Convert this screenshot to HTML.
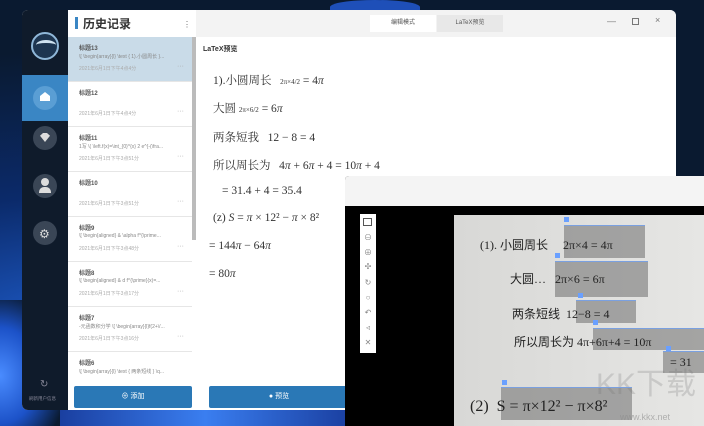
<!DOCTYPE html>
<html style="width:704px;height:426px;overflow:hidden"><head><meta charset="utf-8"><style>
*{margin:0;padding:0;box-sizing:border-box}
body{width:704px;height:426px;overflow:hidden;position:relative;background:#0a1a30;font-family:"Liberation Sans","Noto Sans CJK SC",sans-serif}
.abs{position:absolute}
.serif{font-family:"Liberation Serif","Noto Serif CJK SC",serif;color:#333;font-size:11.5px;white-space:nowrap}
.item{position:absolute;left:68px;width:124px;height:45px;border-bottom:1px solid #e6e6e6;background:#fff}
.item .t{position:absolute;left:11px;top:6px;font-size:6px;font-weight:bold;color:#555}
.item .s{position:absolute;left:11px;top:16px;font-size:5px;color:#888;white-space:nowrap;overflow:hidden;width:106px}
.item .d{position:absolute;left:11px;top:28px;font-size:5px;color:#aaa}
.item .m{position:absolute;right:8px;top:26px;font-size:7px;color:#aaa}
.ic{position:absolute;left:32px;width:24px;height:24px;border-radius:50%;background:#3a4656}
.tb{position:absolute;left:362px;font-size:8px;color:#888;width:12px;text-align:center}
.box{position:absolute;background:rgba(110,110,110,.55);border-top:1px solid #7aa0e0}
.hw{position:absolute;font-family:"Liberation Serif",serif;color:#222;font-size:12px;white-space:nowrap}
.lb{position:absolute;width:5px;height:5px;background:#6aa0ff}
</style></head><body>
<div class="abs" style="left:0;top:0;width:704px;height:426px;background:radial-gradient(ellipse at 10% 80%,#1f5fd0 0%,#0b2a6a 30%,#0a1a30 60%)"></div>
<div class="abs" style="left:330px;top:0;width:90px;height:14px;border-radius:50% 50% 0 0;background:#1e4fb8"></div>
<div class="abs" style="left:0;top:300px;width:60px;height:126px;background:radial-gradient(ellipse at 0% 60%,#4a8cff 0%,#1c52c8 45%,#0a1a30 80%)"></div>
<div class="abs" style="left:60px;top:408px;width:290px;height:18px;background:linear-gradient(90deg,#1a3fa0,#3a7ef0,#1a3fa0)"></div>

<div class="abs" style="left:22px;top:10px;width:654px;height:400px;background:#fff;border-radius:6px;overflow:hidden">
 <div class="abs" style="left:0;top:0;width:46px;height:400px;background:#0f1b2b"></div>
 <div class="abs" style="left:174px;top:0;width:480px;height:27px;background:#f3f3f3"></div>
</div>
<div class="abs" style="left:31px;top:32px;width:28px;height:28px;border-radius:50%;border:2px solid #8fb7d8;background:#1d3550"></div>
<div class="abs" style="left:36px;top:40px;width:20px;height:10px;border-top:3px solid #cfe2f0;border-radius:50% 50% 0 0"></div>
<div class="abs" style="left:22px;top:75px;width:46px;height:46px;background:#3a86c4"></div>
<div class="ic" style="left:33px;top:86px;background:#5a9ed4"></div>
<div class="abs" style="left:40px;top:92px;width:10px;height:9px;background:#fff;clip-path:polygon(50% 0,100% 45%,100% 100%,0 100%,0 45%)"></div>
<div class="ic" style="left:33px;top:126px"></div><div class="abs" style="left:40px;top:133px;width:10px;height:9px;background:#ddd;clip-path:polygon(0 30%,30% 0,70% 0,100% 30%,50% 100%)"></div>
<div class="ic" style="left:33px;top:174px"></div><div class="abs" style="left:41px;top:178px;width:8px;height:8px;border-radius:50%;background:#ddd"></div><div class="abs" style="left:39px;top:187px;width:12px;height:6px;border-radius:5px 5px 0 0;background:#ddd"></div>
<div class="ic" style="left:33px;top:221px"></div><div class="abs" style="left:39px;top:227px;font-size:12px;color:#ddd">⚙</div>
<div class="abs" style="left:40px;top:379px;font-size:10px;color:#889">↻</div>
<div class="abs" style="left:29px;top:396px;font-size:4.5px;color:#889">刷新用户信息</div>

<div class="abs" style="left:75px;top:17px;width:3px;height:12px;background:#3a86c4"></div>
<div class="abs" style="left:83px;top:15px;font-size:12px;font-weight:bold;color:#333">历史记录</div>
<div class="abs" style="left:183px;top:20px;font-size:8px;color:#666">⋮</div>
<div class="abs" style="left:192px;top:37px;width:4px;height:203px;background:#bbb"></div>

<div class="item" style="top:37px;background:#c9dbe8"><div class="t">标题13</div><div class="s">\[ \begin{array}{l} \text { 1).小圆周长 }...</div><div class="d">2021年6月1日下午4点4分</div><div class="m">···</div></div>
<div class="item" style="top:82px"><div class="t">标题12</div><div class="d">2021年6月1日下午4点4分</div><div class="m">···</div></div>
<div class="item" style="top:127px"><div class="t">标题11</div><div class="s">1写 \( \left.f(x)=\int_{0}^{x} 2 e^{-(\fra...</div><div class="d">2021年6月1日下午3点51分</div><div class="m">···</div></div>
<div class="item" style="top:172px"><div class="t">标题10</div><div class="d">2021年6月1日下午3点51分</div><div class="m">···</div></div>
<div class="item" style="top:217px"><div class="t">标题9</div><div class="s">\[ \begin{aligned} &amp; \alpha f^{\prime...</div><div class="d">2021年6月1日下午3点48分</div><div class="m">···</div></div>
<div class="item" style="top:262px"><div class="t">标题8</div><div class="s">\[ \begin{aligned} &amp; d f^{\prime}(x)=...</div><div class="d">2021年6月1日下午3点17分</div><div class="m">···</div></div>
<div class="item" style="top:307px"><div class="t">标题7</div><div class="s">-元函数积分学 \[ \begin{array}{l}f(2+\/...</div><div class="d">2021年6月1日下午3点16分</div><div class="m">···</div></div>
<div class="item" style="top:352px"><div class="t">标题6</div><div class="s">\[ \begin{array}{l} \text { 两条短线 } \q...</div></div>
<div class="abs" style="left:68px;top:380px;width:128px;height:30px;background:#fff"></div>
<div class="abs" style="left:74px;top:386px;width:118px;height:22px;background:#2a78b6;border-radius:2px;color:#fff;font-size:7px;text-align:center;line-height:22px">⊕ 添加</div>

<div class="abs" style="left:370px;top:15px;width:66px;height:17px;background:#fff;font-size:6px;color:#555;text-align:center;line-height:17px">编辑模式</div>
<div class="abs" style="left:437px;top:15px;width:66px;height:17px;background:#e8e8e8;font-size:6px;color:#555;text-align:center;line-height:17px">LaTeX预览</div>
<div class="abs" style="left:607px;top:16px;font-size:9px;color:#777">—</div>
<div class="abs" style="left:632px;top:18px;width:7px;height:7px;border:1px solid #777"></div>
<div class="abs" style="left:655px;top:15px;font-size:9px;color:#777">×</div>

<div class="abs" style="left:203px;top:44px;font-size:7px;font-weight:bold;color:#333">LaTeX预览</div>
<div class="serif abs" style="left:213px;top:72px">1).小圆周长 &nbsp; <span style="font-size:7px">2π×4/2</span> = 4<i>π</i></div>
<div class="serif abs" style="left:213px;top:100px">大圆 <span style="font-size:7px">2π×6/2</span> = 6<i>π</i></div>
<div class="serif abs" style="left:213px;top:129px">两条短我 &nbsp; 12 − 8 = 4</div>
<div class="serif abs" style="left:213px;top:157px">所以周长为 &nbsp; 4<i>π</i> + 6<i>π</i> + 4 = 10<i>π</i> + 4</div>
<div class="serif abs" style="left:222px;top:185px">= 31.4 + 4 = 35.4</div>
<div class="serif abs" style="left:213px;top:212px">(z) <i>S</i> = <i>π</i> × 12² − <i>π</i> × 8²</div>
<div class="serif abs" style="left:209px;top:240px">= 144<i>π</i> − 64<i>π</i></div>
<div class="serif abs" style="left:209px;top:268px">= 80<i>π</i></div>
<div class="abs" style="left:209px;top:386px;width:140px;height:22px;background:#2a78b6;border-radius:2px;color:#fff;font-size:7px;text-align:center;line-height:22px">● 预览</div>

<div class="abs" style="left:345px;top:176px;width:359px;height:250px;background:#000;border-radius:4px 0 0 0;overflow:hidden">
 <div class="abs" style="left:0;top:0;width:359px;height:30px;background:#f4f4f4"></div>
</div>
<div class="abs" style="left:360px;top:214px;width:16px;height:139px;background:#fff"></div>
<div class="abs" style="left:363px;top:218px;width:9px;height:8px;border:1px solid #555"></div>
<div class="tb" style="top:232px">⊖</div><div class="tb" style="top:247px">⊕</div><div class="tb" style="top:262px">✣</div><div class="tb" style="top:278px">↻</div><div class="tb" style="top:293px">○</div><div class="tb" style="top:308px">↶</div><div class="tb" style="top:323px">◃</div><div class="tb" style="top:338px">✕</div>
<div class="abs" style="left:454px;top:215px;width:250px;height:211px;background:linear-gradient(90deg,#d8d8d6,#e6e6e4);overflow:hidden">
 <div class="abs" style="left:142px;top:153px;font-size:30px;line-height:34px;white-space:nowrap;color:rgba(160,160,160,.4);font-family:'Liberation Sans','Noto Sans CJK SC',sans-serif">KK下载</div>
</div>
<div class="box" style="left:564px;top:225px;width:81px;height:33px"></div>
<div class="box" style="left:555px;top:261px;width:93px;height:36px"></div>
<div class="box" style="left:576px;top:300px;width:60px;height:23px"></div>
<div class="box" style="left:593px;top:328px;width:111px;height:22px"></div>
<div class="box" style="left:663px;top:351px;width:41px;height:22px"></div>
<div class="box" style="left:501px;top:387px;width:131px;height:33px"></div>
<div class="lb" style="left:564px;top:217px"></div><div class="lb" style="left:555px;top:253px"></div><div class="lb" style="left:578px;top:293px"></div><div class="lb" style="left:593px;top:320px"></div><div class="lb" style="left:666px;top:346px"></div><div class="lb" style="left:502px;top:380px"></div>
<div class="hw" style="left:480px;top:236px">(1). 小圆周长 &nbsp; &nbsp; 2π×4 = 4π</div>
<div class="hw" style="left:510px;top:270px">大圆… &nbsp; 2π×6 = 6π</div>
<div class="hw" style="left:512px;top:305px">两条短线 &nbsp;12−8 = 4</div>
<div class="hw" style="left:514px;top:333px">所以周长为 4π+6π+4 = 10π</div>
<div class="hw" style="left:670px;top:355px">= 31</div>
<div class="hw" style="left:470px;top:398px;font-size:16px">(2) &nbsp;S = π×12² − π×8²</div>
<div class="abs" style="left:620px;top:412px;font-size:9px;white-space:nowrap;color:rgba(140,140,140,.6)">www.kkx.net</div>
</body></html>
